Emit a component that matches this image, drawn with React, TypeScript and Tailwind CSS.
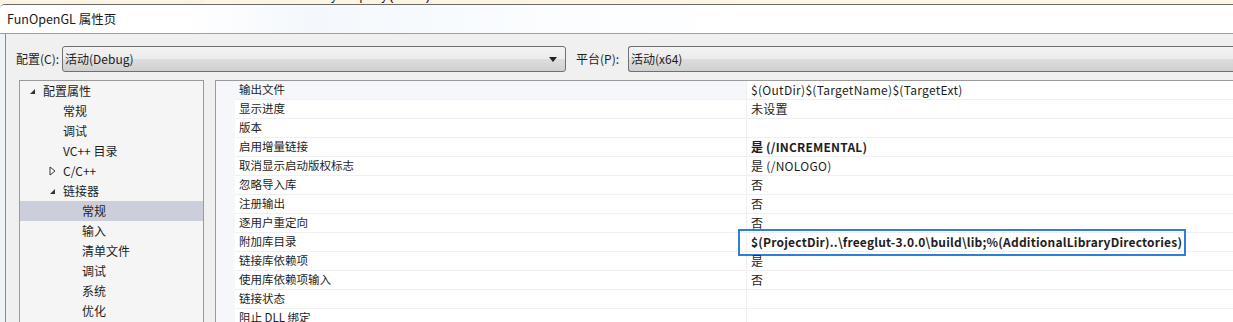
import React from "react";

const treeItems: { label: string; indent: number; icon?: "open" | "closed"; selected?: boolean }[] = [
  { label: "配置属性", indent: 0, icon: "open" },
  { label: "常规", indent: 1 },
  { label: "调试", indent: 1 },
  { label: "VC++ 目录", indent: 1 },
  { label: "C/C++", indent: 1, icon: "closed" },
  { label: "链接器", indent: 1, icon: "open" },
  { label: "常规", indent: 2, selected: true },
  { label: "输入", indent: 2 },
  { label: "清单文件", indent: 2 },
  { label: "调试", indent: 2 },
  { label: "系统", indent: 2 },
  { label: "优化", indent: 2 },
  { label: "嵌入的 IDL", indent: 2 },
];

const rows: { name: string; value: string; bold?: boolean; box?: boolean; active?: boolean }[] = [
  { name: "输出文件", value: "$(OutDir)$(TargetName)$(TargetExt)", active: true },
  { name: "显示进度", value: "未设置" },
  { name: "版本", value: "" },
  { name: "启用增量链接", value: "是 (/INCREMENTAL)", bold: true },
  { name: "取消显示启动版权标志", value: "是 (/NOLOGO)" },
  { name: "忽略导入库", value: "否" },
  { name: "注册输出", value: "否" },
  { name: "逐用户重定向", value: "否" },
  { name: "附加库目录", value: "$(ProjectDir)..\\freeglut-3.0.0\\build\\lib;%(AdditionalLibraryDirectories)", bold: true, box: true },
  { name: "链接库依赖项", value: "是" },
  { name: "使用库依赖项输入", value: "否" },
  { name: "链接状态", value: "" },
  { name: "阻止 DLL 绑定", value: "" },
];

function OpenTri() {
  return (
    <svg width="7" height="7" viewBox="0 0 7 7">
      <polygon points="6,1 6,6 1,6" fill="#333" />
    </svg>
  );
}
function ClosedTri() {
  return (
    <svg width="7" height="10" viewBox="0 0 7 10">
      <polygon points="1,1 6,5 1,9" fill="white" stroke="#333" strokeWidth="1" />
    </svg>
  );
}

function Combo({ text, arrow, className }: { text: string; arrow?: boolean; className: string }) {
  return (
    <div
      className={`h-[26px] rounded-[3px] border border-[#707070] flex items-center pl-[2px] pr-[8px] bg-[linear-gradient(to_bottom,#f3f3f3_0%,#ececec_48%,#dddddd_52%,#d0d0d0_100%)] ${className}`}
    >
      <span className="flex-1 text-[12px] text-[#1e1e1e] leading-none">{text}</span>
      {arrow && (
        <svg width="8" height="5" viewBox="0 0 8 5">
          <polygon points="0,0 8,0 4,5" fill="#222" />
        </svg>
      )}
    </div>
  );
}

export default function App() {
  return (
    <div className="w-[1233px] h-[322px] overflow-hidden bg-[#fdf5e4] flex flex-col font-['Noto_Sans_CJK_SC',sans-serif]">
      {/* background editor strip */}
      <div className="h-[4px] overflow-hidden relative shrink-0 flex">
        <div className="w-[205px] bg-[#fbf3e2]" />
        <div className="flex-1 relative">
          <div className="absolute left-[47px] top-[-10px] text-[12px] font-['Liberation_Mono',monospace] text-[#2b91af] leading-[14px]">8</div>
          <div className="absolute left-[75px] top-[-10px] text-[12px] font-['Liberation_Mono',monospace] leading-[14px] whitespace-pre">
            <span className="text-[#555]">⊟</span>
            <span className="text-[#6a8a00]">void</span>
            <span className="text-[#111]"> MyDisplay(</span>
            <span className="text-[#6a8a00]">void</span>
            <span className="text-[#111]">)</span>
          </div>
        </div>
      </div>

      {/* dialog */}
      <div className="flex-1 flex flex-col border-t border-[#6b6b6b] rounded-tl-[5px] bg-white overflow-hidden">
        <div className="h-[28px] shrink-0 flex items-center pl-[7px] bg-[linear-gradient(to_right,#ffffff_0%,#ffffff_15%,#f4f8fc_25%,#fbfdff_45%,#ffffff_60%)]">
          <span className="text-[12.5px] text-[#1a1a1a] leading-none">FunOpenGL 属性页</span>
        </div>
        <div className="flex-1 flex border-t border-[#a0a0a0]">
          <div className="w-[6px] shrink-0 bg-[#eef3f8] border-r border-[#8a8a8a]" />
          <div className="flex-1 bg-[#f0f0f0] flex flex-col overflow-hidden">
            {/* config row */}
            <div className="flex items-center h-[26px] mt-[12px] shrink-0">
              <span className="ml-[10px] w-[46px] text-[12px] text-[#1e1e1e]">配置(C):</span>
              <Combo text="活动(Debug)" arrow className="w-[504px]" />
              <span className="ml-[10px] w-[52px] text-[12px] text-[#1e1e1e]">平台(P):</span>
              <Combo text="活动(x64)" className="flex-1 rounded-r-none border-r-0" />
            </div>

            {/* panels */}
            <div className="flex mt-[8px] flex-1 min-h-0">
              {/* tree */}
              <div className="ml-[13px] w-[185px] shrink-0 border border-[#9a9a9a] border-b-0 bg-[#f5f5f5] pt-0 overflow-hidden">
                {treeItems.map((it, i) => (
                  <div
                    key={i}
                    className={`h-[20px] flex items-center text-[12px] text-[#1e1e1e] ${it.selected ? "bg-[#cccedb]" : ""}`}
                  >
                    <div
                      className="shrink-0 flex items-center justify-end pr-[7px]"
                      style={{ width: it.indent === 0 ? 23 : it.indent === 1 ? 43 : 62 }}
                    >
                      {it.icon === "open" && <OpenTri />}
                      {it.icon === "closed" && <ClosedTri />}
                    </div>
                    <span className="leading-none">{it.label}</span>
                  </div>
                ))}
              </div>

              {/* property grid */}
              <div className="ml-[11px] flex-1 border-t border-l border-[#9a9a9a] bg-white flex overflow-hidden">
                <div className="w-[19px] shrink-0 bg-[#f5f7fa]" />
                <div className="flex-1 flex flex-col">
                  {rows.map((r, i) => (
                    <div key={i} className="h-[19px] shrink-0 flex border-b border-[#eef0f4]">
                      <div
                        className={`w-[512px] shrink-0 pl-[4px] flex items-center text-[11.5px] text-[#1e1e1e] border-r border-[#eef0f4] ${r.active ? "bg-[#f5f7fa]" : ""}`}
                      >
                        <span className="leading-none">{r.name}</span>
                      </div>
                      <div className="flex-1 pl-[4px] flex items-center relative">
                        <span
                          className={`text-[12px] leading-none text-[#1e1e1e] whitespace-nowrap ${r.bold ? "font-bold tracking-[0.2px]" : "tracking-[0.3px]"}`}
                        >
                          {r.value}
                        </span>
                        {r.box && (
                          <div className="absolute left-[-9px] top-[-4px] w-[448px] h-[27px] border-2 border-[#2f7fd6]" />
                        )}
                      </div>
                    </div>
                  ))}
                </div>
              </div>
            </div>
          </div>
        </div>
      </div>
    </div>
  );
}
